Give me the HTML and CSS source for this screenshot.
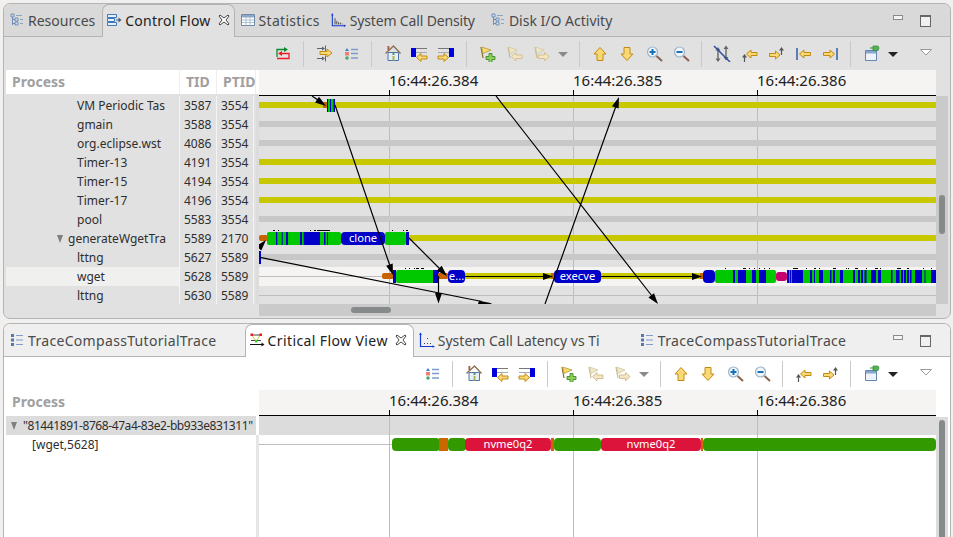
FILE: index.html
```html
<!DOCTYPE html>
<html lang="en">
<head>
    <meta charset="UTF-8">
    <meta name="viewport" content="width=device-width, initial-scale=1.0">
    <title>Trace Compass - Control Flow</title>
    <link rel="stylesheet" href="styles.css">
</head>
<body>
    <!-- icon set -->
    <svg class="icon-defs">
        <symbol id="t-tree" viewBox="0 0 16 16">
            <path d="M3.5 3v10M3.5 7.500H6M3.5 11.500H6" fill="none" stroke="#6f8fb8"/>
            <path d="M2 2h3v3H2zM6 6h3v3H6zM6 10h3v3H6z" fill="#cfdcec" stroke="#5f82ad" stroke-width=".8"/>
            <path d="M7 3.500h6M11 7.500h3M11 11.500h3" stroke="#8aa4c6" stroke-width="1.2"/>
        </symbol>
        <symbol id="t-flow" viewBox="0 0 16 16">
            <path d="M1.500 2.500h9v3h-9zM1.500 6.500h7v3h-7zM1.500 10.500h9v3h-9z" fill="#e8f0f8" stroke="#3f78b8"/>
            <path d="M10 8h3" stroke="#4a5f78"/>
            <path d="M12.500 5.500l3 2.500-3 2.500z" fill="#4a5f78"/>
        </symbol>
        <symbol id="t-table" viewBox="0 0 16 16">
            <path d="M1.500 2.500h13v11h-13z" fill="#fff" stroke="#6f8aa8"/>
            <path d="M2 3h12v2.500H2z" fill="#8fa8c4"/>
            <path d="M2 8h12M2 10.500h12M6 5.500v8M10 5.500v8" stroke="#9db2c8" stroke-width=".8"/>
        </symbol>
        <symbol id="t-density" viewBox="0 0 18 16">
            <path d="M1.500 1v13.500H16" fill="none" stroke="#1238d8" stroke-width="1.200"/>
            <path d="M.2 3l1.300-2.500L2.800 3zM14.500 13.200l2.500 1.300-2.500 1.300z" fill="#1238d8"/>
            <path d="M4.500 13V6M6.500 13V9M8.500 13v-2.500M10.500 13v-2M12.500 13v-1" stroke="#333" stroke-width=".9"/>
        </symbol>
        <symbol id="t-list" viewBox="0 0 16 16">
            <path d="M2 2h3v3H2zM2 6.500h3v3H2zM2 11h3v3H2z" fill="#5378b0"/>
            <path d="M7 3.500h7M7 8h7M7 12.500h7" stroke="#7f9ccc" stroke-width="1.200"/>
        </symbol>
        <symbol id="t-critical" viewBox="0 0 16 16">
            <path d="M2 3h10M2 8.500h10" stroke="#444"/>
            <path d="M3 3.500l4 5.500 4-5.500" fill="none" stroke="#d8c23a"/>
            <path d="M1 12.500h12" stroke="#111" stroke-width="1.200"/>
            <path d="M12.500 10.500l3 2-3 2z" fill="#111"/>
            <path d="M1.500 1.500h2.500v2.500H1.500zM10.500 1.500H13v2.500h-2.500z" fill="#e81818"/>
            <path d="M6 8h2.500v2.500H6z" fill="#38d838"/>
        </symbol>
        <symbol id="t-latency" viewBox="0 0 16 16">
            <path d="M1.500 1v13.500H15" fill="none" stroke="#1238d8" stroke-width="1.200"/>
            <path d="M.2 3l1.300-2.500L2.800 3zM13.500 13.200l2.500 1.300-2.500 1.300z" fill="#1238d8"/>
            <path d="M5 11h1v1H5zM8 6h1v1H8zM8 11h1v1H8zM11 11h1v1h-1z" fill="#444"/>
        </symbol>
        <symbol id="t-close" viewBox="0 0 12 12">
            <path d="M2 1l4 3 4-3 1 1-3 4 3 4-1 1-4-3-4 3-1-1 3-4-3-4z" fill="#fff" stroke="#333" stroke-width=".9"/>
        </symbol>

        <symbol id="i-sync" viewBox="0 0 18 18">
            <path d="M3 13V5.500h9" fill="none" stroke="#0a8a2c" stroke-width="1.300"/>
            <path d="M10 3l4 2.500L10 8z" fill="#0a8a2c"/>
            <path d="M8 9.500h7v5H3" fill="none" stroke="#ec1c24" stroke-width="1.300"/>
            <path d="M8 7L4 9.500 8 12z" fill="#ec1c24"/>
        </symbol>
        <symbol id="i-align" viewBox="0 0 18 18">
            <path d="M2 4.500h6M2 14.500h6M10.500 1.500v6M10.500 11.500v6" stroke="#5c6670"/>
            <path d="M7 2.500l3 2-3 2zM7 12.500l3 2-3 2z" fill="#5c6670"/>
            <path class="arrow" d="M5 7.500h7V5l5 4-5 4v-2.500H5z"/>
        </symbol>
        <symbol id="i-legend" viewBox="0 0 18 18">
            <path d="M5 4l2 3H3z" fill="#3f7fc0"/>
            <path d="M3 8h4v3.500H3z" fill="#e88078"/>
            <circle cx="5" cy="14" r="1.800" fill="#4aa868"/>
            <path d="M9 5.500h7M9 9.500h7M9 14h7" stroke="#7e9ccf" stroke-width="1.500"/>
        </symbol>
        <symbol id="i-home" viewBox="0 0 18 18">
            <path d="M4.500 2h1.800v4H4.500z" fill="#a8583c"/>
            <path d="M5 8.500h10.500v8H5z" fill="#e6eef8" stroke="#4f74ab"/>
            <path d="M2.500 9.500L10.500 2l7 7.500" fill="none" stroke="#8a7350" stroke-width="1.400"/>
            <path d="M9.500 12h2v4.500h-2z" fill="#a7b84a"/>
            <path d="M9.500 9h2v2h-2z" fill="#5e9a5e"/>
        </symbol>
        <symbol id="i-back" viewBox="0 0 18 18">
            <path d="M1 4h5v9H1z" fill="#0000dc"/>
            <path d="M6 4.500h11" stroke="#777"/>
            <path d="M6 8.500h11" stroke="#aaa"/>
            <path class="arrow" d="M6.500 13.500l4.500-4V12h6v3h-6v2.500z"/>
        </symbol>
        <symbol id="i-forward" viewBox="0 0 18 18">
            <path d="M12 4h5v9h-5z" fill="#0000dc"/>
            <path d="M1 4.500h11" stroke="#777"/>
            <path d="M1 8.500h11" stroke="#aaa"/>
            <path class="arrow" d="M11.500 13.500l-4.500-4V12H1v3h6v2.500z"/>
        </symbol>
        <symbol id="i-mark-add" viewBox="0 0 18 18">
            <path d="M3 3l2 11" stroke="#8a6a2a" stroke-width="1.200"/>
            <path d="M3.500 3L13 6 5 9.500z" fill="#f4dc68" stroke="#b89838" stroke-width=".8"/>
            <path d="M11 9.500h3v3h3v3h-3v3h-3v-3H8v-3h3z" fill="#8fd14f" stroke="#3c8a3c" stroke-width=".9"/>
        </symbol>
        <symbol id="i-mark-prev" viewBox="0 0 18 18">
            <path d="M3 3l2 11" stroke="#c4b890" stroke-width="1.200"/>
            <path d="M3.500 3L12 6 5 9.500z" fill="#efe8c8" stroke="#d0c6a0" stroke-width=".8"/>
            <path d="M6.500 12.500l4.500-4V11h6v3.500h-6V17z" fill="#f4e6c4" stroke="#d4bf8e"/>
        </symbol>
        <symbol id="i-mark-next" viewBox="0 0 18 18">
            <path d="M3 3l2 11" stroke="#c4b890" stroke-width="1.200"/>
            <path d="M3.500 3L12 6 5 9.500z" fill="#efe8c8" stroke="#d0c6a0" stroke-width=".8"/>
            <path d="M17 12.500l-4.500-4V11h-6v3.500h6V17z" fill="#f4e6c4" stroke="#d4bf8e"/>
        </symbol>
        <symbol id="i-up" viewBox="0 0 18 18">
            <path class="arrow" d="M9 3.500l6 6.500h-3v6.500H6V10H3z"/>
        </symbol>
        <symbol id="i-down" viewBox="0 0 18 18">
            <path class="arrow" d="M9 16.500L3 10h3V3.500h6V10h3z"/>
        </symbol>
        <symbol id="i-zoom-in" viewBox="0 0 18 18">
            <path d="M11.500 12l5.500 5" stroke="#8a6050" stroke-width="2"/>
            <circle cx="7.500" cy="8" r="5" fill="#eef5fb" stroke="#9fb4c8" stroke-width="1.200"/>
            <path d="M7.500 5v6M4.500 8h6" stroke="#1a6fb5" stroke-width="2"/>
        </symbol>
        <symbol id="i-zoom-out" viewBox="0 0 18 18">
            <path d="M11.500 12l5.500 5" stroke="#8a6050" stroke-width="2"/>
            <circle cx="7.500" cy="8" r="5" fill="#eef5fb" stroke="#9fb4c8" stroke-width="1.200"/>
            <path d="M4.500 8h6" stroke="#1a6fb5" stroke-width="2"/>
        </symbol>
        <symbol id="i-hide-arrows" viewBox="0 0 18 18">
            <path d="M5 6v9M13 4v9" stroke="#666" stroke-width="1.400"/>
            <path d="M5 3l2.500 3.500h-5zM5 18l2.500-3.500h-5zM13 1.500l2.500 3.500h-5zM13 16.500l2.500-3.500h-5z" fill="#666"/>
            <path d="M1 2l16 16" stroke="#2a4fa0" stroke-width="1.500"/>
        </symbol>
        <symbol id="i-arrow-prev" viewBox="0 0 18 18">
            <path d="M4.500 13v5" stroke="#555" stroke-width="1.200"/>
            <path d="M4.500 10L7 13.500H2z" fill="#555"/>
            <path class="arrow" d="M6.500 10L11 6v2.500h6v3h-6V14z"/>
        </symbol>
        <symbol id="i-arrow-next" viewBox="0 0 18 18">
            <path d="M14.500 6v5" stroke="#555" stroke-width="1.200"/>
            <path d="M14.500 3L17 6.500h-5z" fill="#555"/>
            <path class="arrow" d="M13 11L8.500 7v2.500h-6v3h6V15z"/>
        </symbol>
        <symbol id="i-line-prev" viewBox="0 0 18 18">
            <path d="M2 4h2v12H2z" fill="#5b7fb5"/>
            <path class="arrow" d="M5.500 10L10 6v2.500h6.500v3H10V14z"/>
        </symbol>
        <symbol id="i-line-next" viewBox="0 0 18 18">
            <path d="M15 4h2v12h-2z" fill="#5b7fb5"/>
            <path class="arrow" d="M13.500 10L9 6v2.500H2.500v3H9V14z"/>
        </symbol>
        <symbol id="i-pin" viewBox="0 0 18 18">
            <path d="M3.500 6.500h11v10h-11z" fill="#eef3f9" stroke="#5f86b4"/>
            <path d="M4 7h10v2.500H4z" fill="#86a8cf"/>
            <path d="M8 4h4" stroke="#2e8a2e"/>
            <path d="M11 2h5l1 2-1 2.500h-5z" fill="#58b058" stroke="#2e8a2e" stroke-width=".7"/>
        </symbol>
        <symbol id="i-drop-grey" viewBox="0 0 18 18">
            <path d="M3 8h10l-5 5z" fill="#8a8a8a"/>
        </symbol>
        <symbol id="i-drop-black" viewBox="0 0 18 18">
            <path d="M3 8h10l-5 5z" fill="#222"/>
        </symbol>
        <symbol id="i-view-menu" viewBox="0 0 18 18">
            <path d="M3.500 5.500h11L9 11z" fill="#fff" stroke="#9a9a9a"/>
        </symbol>
    </svg>

    <section class="part part-top">
        <div class="tabbar">
            <div class="tab"><svg class="tab-icon"><use href="#t-tree"/></svg>Resources</div>
            <div class="tab tab-active tab-flow">
                <svg class="tab-icon"><use href="#t-flow"/></svg>Control Flow
                <svg class="tab-close"><use href="#t-close"/></svg>
            </div>
            <div class="tab tab-stats"><svg class="tab-icon"><use href="#t-table"/></svg>Statistics</div>
            <div class="tab tab-density"><svg class="tab-icon"><use href="#t-density"/></svg>System Call Density</div>
            <div class="tab tab-disk"><svg class="tab-icon"><use href="#t-tree"/></svg>Disk I/O Activity</div>
            <div class="part-controls">
                <span class="btn-min"></span>
                <span class="btn-max"></span>
            </div>
        </div>

        <div class="toolbar">
            <svg class="tool"><use href="#i-sync"/></svg>
            <span class="tool-sep"></span>
            <svg class="tool"><use href="#i-align"/></svg>
            <svg class="tool"><use href="#i-legend"/></svg>
            <span class="tool-sep"></span>
            <svg class="tool"><use href="#i-home"/></svg>
            <svg class="tool"><use href="#i-back"/></svg>
            <svg class="tool"><use href="#i-forward"/></svg>
            <span class="tool-sep"></span>
            <svg class="tool"><use href="#i-mark-add"/></svg>
            <svg class="tool"><use href="#i-mark-prev"/></svg>
            <svg class="tool"><use href="#i-mark-next"/></svg>
            <svg class="tool-drop"><use href="#i-drop-grey"/></svg>
            <span class="tool-sep"></span>
            <svg class="tool"><use href="#i-up"/></svg>
            <svg class="tool"><use href="#i-down"/></svg>
            <svg class="tool"><use href="#i-zoom-in"/></svg>
            <svg class="tool"><use href="#i-zoom-out"/></svg>
            <span class="tool-sep"></span>
            <svg class="tool"><use href="#i-hide-arrows"/></svg>
            <svg class="tool"><use href="#i-arrow-prev"/></svg>
            <svg class="tool"><use href="#i-arrow-next"/></svg>
            <svg class="tool"><use href="#i-line-prev"/></svg>
            <svg class="tool"><use href="#i-line-next"/></svg>
            <span class="tool-sep"></span>
            <svg class="tool"><use href="#i-pin"/></svg>
            <svg class="tool-drop"><use href="#i-drop-black"/></svg>
            <svg class="tool tool-menu"><use href="#i-view-menu"/></svg>
        </div>

        <div class="viewer">
            <div class="tree">
                <div class="tree-head">
                    <div class="head-cell head-process">Process</div>
                    <div class="head-cell">TID</div>
                    <div class="head-cell">PTID</div>
                </div>
                <div class="row"><div class="cell name">VM Periodic Tas</div><div class="cell">3587</div><div class="cell">3554</div></div>
                <div class="row"><div class="cell name">gmain</div><div class="cell">3588</div><div class="cell">3554</div></div>
                <div class="row"><div class="cell name">org.eclipse.wst</div><div class="cell">4086</div><div class="cell">3554</div></div>
                <div class="row"><div class="cell name">Timer-13</div><div class="cell">4191</div><div class="cell">3554</div></div>
                <div class="row"><div class="cell name">Timer-15</div><div class="cell">4194</div><div class="cell">3554</div></div>
                <div class="row"><div class="cell name">Timer-17</div><div class="cell">4196</div><div class="cell">3554</div></div>
                <div class="row"><div class="cell name">pool</div><div class="cell">5583</div><div class="cell">3554</div></div>
                <div class="row"><div class="cell name-parent"><span class="twist"></span>generateWgetTra</div><div class="cell">5589</div><div class="cell">2170</div></div>
                <div class="row"><div class="cell name">lttng</div><div class="cell">5627</div><div class="cell">5589</div></div>
                <div class="row"><div class="cell name row-selected">wget</div><div class="cell">5628</div><div class="cell">5589</div></div>
                <div class="row"><div class="cell name">lttng</div><div class="cell">5630</div><div class="cell">5589</div></div>
            </div>
            <div class="sash"></div>
            <div class="graph">
                <div class="timescale">
                    <div class="time-label">16:44:26.384<span class="time-tick"></span></div>
                    <div class="time-label">16:44:26.385<span class="time-tick"></span></div>
                    <div class="time-label">16:44:26.386<span class="time-tick"></span></div>
                </div>
                <svg class="flow-canvas flow-top" viewBox="259 96 677 208">
                    <rect x="259" y="267" width="677" height="19" fill="#f5f4f2"/>
                    <path class="grid" d="M389.500 96v208M573.500 96v208M757.500 96v208"/>
                    <path class="grid" d="M259 295.500h677M259 276.500h123"/>

                    <rect class="s-wait" x="259" y="102" width="677" height="6"/>
                    <rect class="s-idle" x="259" y="121" width="677" height="6"/>
                    <rect class="s-idle" x="259" y="140" width="677" height="6"/>
                    <rect class="s-wait" x="259" y="159" width="677" height="6"/>
                    <rect class="s-wait" x="259" y="178" width="677" height="6"/>
                    <rect class="s-wait" x="259" y="197" width="677" height="6"/>
                    <rect class="s-idle" x="259" y="216" width="677" height="6"/>
                    <rect class="s-wait" x="409" y="235" width="527" height="6"/>
                    <rect class="s-idle" x="259" y="254" width="677" height="6"/>

                    <!-- VM Periodic Tas -->
                    <rect class="s-block" x="323" y="102" width="4" height="6"/>
                    <rect class="s-user" x="327" y="99" width="8" height="13"/>
                    <path class="s-sys" d="M327 99h1v13h-1zM330 99h1v13h-1zM333.500 99h1.500v13h-1.500z"/>

                    <!-- generateWgetTra -->
                    <rect class="s-block" x="259" y="235" width="9" height="6" rx="2"/>
                    <rect class="s-user" x="267" y="232" width="74" height="13" rx="2"/>
                    <path class="s-sys" d="M276 232h1.300v13H276zM281.700 232h1v13h-1zM286 232h2v13h-2zM300 232h2v13h-2zM303.700 232H320v13h-16.300zM324 232h1.500v13H324zM327 232h1v13h-1z"/>
                    <rect class="s-user" x="385" y="232" width="21" height="13" rx="2"/>
                    <rect class="s-sys" x="406" y="232" width="3" height="13"/>
                    <rect class="s-sys" x="341" y="232" width="44" height="13" rx="4"/>
                    <text class="bar-label" x="363" y="242">clone</text>
                    <path class="ticks" d="M273 230h2v1h-2zM278 230h1v1h-1zM310 230h1v1h-1zM314 230h2v1h-2zM317 230h13v1h-13zM392 230h1v1h-1zM403 230h1v1h-1zM406 230h2v1h-2z"/>

                    <!-- lttng -->
                    <rect class="s-sys" x="259" y="251" width="2" height="13"/>

                    <!-- wget -->
                    <rect class="s-block" x="382" y="273" width="12" height="6" rx="2"/>
                    <rect class="s-sys" x="393" y="270" width="3" height="13"/>
                    <rect class="s-user" x="396" y="270" width="38" height="13" rx="2"/>
                    <rect class="s-sys" x="433" y="270" width="6" height="13"/>
                    <rect class="s-block" x="438" y="273" width="10" height="6" rx="1"/>
                    <rect class="s-sys" x="448" y="270" width="17" height="13" rx="4"/>
                    <text class="bar-label" x="456.500" y="280">e...</text>
                    <rect class="s-wait" x="465" y="273" width="89" height="6"/>
                    <rect class="s-block" x="551" y="273" width="4" height="6"/>
                    <rect class="s-sys" x="554" y="270" width="47" height="13" rx="4"/>
                    <text class="bar-label" x="577.500" y="280">execve</text>
                    <rect class="s-wait" x="601" y="273" width="101" height="6"/>
                    <rect class="s-block" x="700" y="273" width="3" height="6"/>
                    <rect class="s-sys" x="703" y="270" width="12" height="13" rx="4"/>
                    <rect class="s-user" x="715" y="270" width="61" height="13" rx="2"/>
                    <path class="s-sys" d="M733 270h2v13h-2zM738 270h8v13h-8zM752 270h4v13h-4zM759 270h7v13h-7z"/>
                    <rect class="s-preempt" x="776" y="272" width="11" height="9" rx="3"/>
                    <rect class="s-user" x="787" y="270" width="149" height="13"/>
                    <path class="s-sys" d="M787 270h2v13h-2zM790 270h1v13h-1zM792 270h11v13h-11zM810 270h2v13h-2zM814 270h1v13h-1zM819 270h4v13h-4zM830 270h1.500v13H830zM833 270h2v13h-2zM840 270h3v13h-3zM853 270h2v13h-2zM858 270h2v13h-2zM861 270h2v13h-2zM864.500 270h2v13h-2zM871 270h5v13h-5zM878 270h3v13h-3zM891 270h1.500v13H891zM896 270h3.500v13H896zM901 270h2v13h-2zM904 270h2v13h-2zM907 270h2v13h-2zM910 270h1.500v13H910zM915 270h7v13h-7zM924.500 270h1v13h-1zM931 270h5v13h-5z"/>
                    <path class="ticks" d="M405 268h1v1h-1zM409 268h1v1h-1zM414 268h1v1h-1zM416 268h3v1h-3zM421 268h3v1h-3zM725 268h1v1h-1zM743 268h3v1h-3zM749 268h1v1h-1zM754 268h1v1h-1zM759 268h1v1h-1zM764 268h1v1h-1zM769 268h1v1h-1zM793 268h5v1h-5zM806 268h1v1h-1zM814 268h2v1h-2zM819 268h1v1h-1zM833 268h3v1h-3zM846 268h1v1h-1zM848 268h1v1h-1zM855 268h3v1h-3zM866 268h1v1h-1zM875 268h3v1h-3zM880 268h1v1h-1zM897 268h4v1h-4zM907 268h2v1h-2zM923 268h1v1h-1zM931 268h1v1h-1z"/>

                    <!-- arrows -->
                    <path class="link" d="M335 105L390 266M312 96l6 4M409 238l31 31M438.500 276v18M260 257.300L482 301.500M545 304l71-198M496 96l156 200M465 276.500h80M601 276.500h92"/>
                    <path class="head" d="M326 106l-11-3.500 4-5.800zM393 275l-6.900-9.300 6.600-2.200zM266 240l-4.700 10.600-5.200-4.600zM447 276l-10.300-5.300 5-5zM438.500 303.500L435 293h7zM479 300.800l11.500 2.200 1.500 1h-14zM619 97l-.4 11.600-6.600-2.400zM658 304l-9.600-6.500 5.600-4.300zM553 276.500l-10-3.500v7zM702 276.500l-10-3.500v7z"/>
                </svg>
            </div>
            <div class="vscroll"><span class="vthumb vthumb-top"></span></div>
        </div>
        <div class="hscroll"><span class="hthumb"></span></div>
    </section>

    <section class="part part-bottom">
        <div class="tabbar">
            <div class="tab tab-trace"><svg class="tab-icon"><use href="#t-list"/></svg>TraceCompassTutorialTrace</div>
            <div class="tab tab-active tab-critical">
                <svg class="tab-icon"><use href="#t-critical"/></svg>Critical Flow View
                <svg class="tab-close"><use href="#t-close"/></svg>
            </div>
            <div class="tab tab-latency"><svg class="tab-icon"><use href="#t-latency"/></svg><span class="tab-clip">System Call Latency vs Ti</span></div>
            <div class="tab tab-trace-last"><svg class="tab-icon"><use href="#t-list"/></svg>TraceCompassTutorialTrace</div>
            <div class="part-controls">
                <span class="btn-min"></span>
                <span class="btn-max"></span>
            </div>
        </div>

        <div class="toolbar">
            <svg class="tool"><use href="#i-legend"/></svg>
            <span class="tool-sep"></span>
            <svg class="tool"><use href="#i-home"/></svg>
            <svg class="tool"><use href="#i-back"/></svg>
            <svg class="tool"><use href="#i-forward"/></svg>
            <span class="tool-sep"></span>
            <svg class="tool"><use href="#i-mark-add"/></svg>
            <svg class="tool"><use href="#i-mark-prev"/></svg>
            <svg class="tool"><use href="#i-mark-next"/></svg>
            <svg class="tool-drop"><use href="#i-drop-grey"/></svg>
            <span class="tool-sep"></span>
            <svg class="tool"><use href="#i-up"/></svg>
            <svg class="tool"><use href="#i-down"/></svg>
            <svg class="tool"><use href="#i-zoom-in"/></svg>
            <svg class="tool"><use href="#i-zoom-out"/></svg>
            <span class="tool-sep"></span>
            <svg class="tool"><use href="#i-arrow-prev"/></svg>
            <svg class="tool"><use href="#i-arrow-next"/></svg>
            <span class="tool-sep"></span>
            <svg class="tool"><use href="#i-pin"/></svg>
            <svg class="tool-drop"><use href="#i-drop-black"/></svg>
            <svg class="tool tool-menu"><use href="#i-view-menu"/></svg>
        </div>

        <div class="viewer">
            <div class="tree">
                <div class="tree-head tree-head-solo">
                    <div class="head-cell">Process</div>
                </div>
                <div class="crit-row crit-row-root"><span class="twist twist-root"></span><span class="crit-id">"81441891-8768-47a4-83e2-bb933e831311"</span></div>
                <div class="crit-row crit-row-child">[wget,5628]</div>
            </div>
            <div class="sash sash-light"></div>
            <div class="graph">
                <div class="timescale">
                    <div class="time-label">16:44:26.384<span class="time-tick"></span></div>
                    <div class="time-label">16:44:26.385<span class="time-tick"></span></div>
                    <div class="time-label">16:44:26.386<span class="time-tick"></span></div>
                </div>
                <svg class="flow-canvas flow-bottom" viewBox="259 416 677 121">
                    <rect x="259" y="416" width="677" height="19" fill="#dcdcdc"/>
                    <path class="grid" d="M389.500 416v121M573.500 416v121M757.500 416v121"/>
                    <path class="grid" d="M259 444.500h133"/>
                    <rect class="c-run" x="392" y="438" width="48" height="13" rx="4"/>
                    <rect class="c-block" x="439" y="438" width="9" height="13"/>
                    <rect class="c-run" x="448" y="438" width="18" height="13" rx="4"/>
                    <rect class="c-net" x="465" y="438" width="86" height="13" rx="4"/>
                    <rect class="c-block" x="551" y="438" width="3" height="13"/>
                    <rect class="c-run" x="554" y="438" width="47" height="13" rx="4"/>
                    <rect class="c-net" x="601" y="438" width="100" height="13" rx="4"/>
                    <rect class="c-block" x="701" y="438" width="2" height="13"/>
                    <rect class="c-run" x="703" y="438" width="233" height="13" rx="4"/>
                    <text class="bar-label" x="508" y="448">nvme0q2</text>
                    <text class="bar-label" x="651" y="448">nvme0q2</text>
                </svg>
            </div>
            <div class="vscroll vscroll-light"><span class="vthumb vthumb-bottom"></span></div>
        </div>
    </section>
</body>
</html>
```

FILE: styles.css
```css
html, body {
    margin: 0;
    padding: 0;
    height: 537px;
    overflow: hidden;
}

body {
    background-color: #f1f0ef;
    font-family: "Noto Sans", sans-serif;
    color: #2e2e2e;
    padding-top: 3px;
    box-sizing: border-box;
}

.icon-defs {
    display: none;
}

.part {
    box-sizing: border-box;
    width: 948px;
    margin-left: 3px;
    border: 1px solid #b4b4b4;
    border-radius: 7px 7px 0 0;
    overflow: hidden;
}

.part-top {
    height: 316px;
    background-color: #e1e1e1;
    border-radius: 7px;
}

.part-bottom {
    height: 220px;
    margin-top: 4px;
    background-color: #fff;
    border-bottom: none;
}

/* tabs */
.tabbar {
    display: flex;
    height: 32px;
    border-bottom: 1px solid #b4b4b4;
    box-sizing: content-box;
    font-size: 14px;
    color: #4a4a4a;
}

.part-top .tabbar {
    background-color: #d9d9d9;
}

.part-bottom .tabbar {
    background-color: #efefef;
}

.tab {
    display: flex;
    align-items: center;
    padding: 0 7px 0 5px;
    white-space: nowrap;
}

.tab-icon {
    width: 16px;
    height: 16px;
    margin-right: 3px;
    flex: none;
}

.tab-active {
    box-sizing: border-box;
    height: 33px;
    padding: 0 6px 2px 3px;
    color: #222;
    border: 1px solid #b4b4b4;
    border-bottom: none;
    border-radius: 7px 7px 0 0;
}

.part-top .tab-active {
    background-color: #e1e1e1;
}

.part-bottom .tab-active {
    background-color: #fff;
}

.tab-close {
    width: 12px;
    height: 12px;
    margin-left: 7px;
    flex: none;
}

.tab-flow {
    padding-right: 4px;
    letter-spacing: .25px;
}

.tab-stats {
    letter-spacing: .3px;
}

.tab-density {
    margin-left: -1px;
    letter-spacing: -.15px;
}

.tab-disk {
    margin-left: 3px;
}

.tab-trace {
    padding-right: 28px;
    letter-spacing: .32px;
}

.tab-critical {
    letter-spacing: .4px;
}

.tab-latency {
    width: 220px;
    box-sizing: border-box;
}

.tab-clip {
    display: block;
    width: 164px;
    overflow: hidden;
}

.tab-trace-last {
    letter-spacing: .32px;
}

.part-controls {
    display: flex;
    align-items: flex-start;
    gap: 17px;
    margin-left: auto;
    padding: 11px 19px 0 0;
}

.btn-min {
    box-sizing: border-box;
    width: 10px;
    height: 5px;
    background-color: #f4f4f4;
    border: 1px solid #8a8a8a;
}

.btn-max {
    box-sizing: border-box;
    width: 11px;
    height: 12px;
    background-color: #f0f0f0;
    border: 1px solid #666;
    border-top-width: 2px;
}

/* toolbar */
.toolbar {
    display: flex;
    justify-content: flex-end;
    align-items: flex-start;
    height: 33px;
    box-sizing: border-box;
    padding: 7px 10px 0 0;
}

.tool {
    width: 18px;
    height: 18px;
    margin: 0 5px 0 4px;
    flex: none;
}

.tool-drop {
    width: 18px;
    height: 18px;
    flex: none;
}

.tool-menu {
    margin-left: 14px;
}

.tool-sep {
    width: 1px;
    height: 26px;
    margin: -3px 7px 0 6px;
    background-color: #c9c9c9;
    flex: none;
}

.arrow {
    fill: #f9d976;
    stroke: #c38a12;
    stroke-width: 1;
}

/* tree + graph */
.viewer {
    display: flex;
    padding-left: 2px;
}

.part-top .viewer {
    height: 234px;
}

.part-bottom .viewer {
    height: 147px;
}

.tree {
    width: 250px;
    flex: none;
    font-size: 12px;
    line-height: 19px;
    overflow: hidden;
}

.tree-head {
    display: grid;
    grid-template-columns: 174px 37px 39px;
    height: 24px;
    margin-bottom: 2px;
    background-color: #fff;
    font-size: 14px;
    font-weight: 700;
    line-height: 24px;
    color: #a0a0a0;
}

.tree-head-solo {
    grid-template-columns: 250px;
}

.tree-head-solo .head-cell {
    border-right: none;
}

.head-cell {
    box-sizing: border-box;
    padding-left: 6px;
    border-right: 1px solid #eee;
    white-space: nowrap;
    overflow: hidden;
}

.row {
    display: grid;
    grid-template-columns: 174px 37px 37px;
    height: 19px;
}

.cell {
    box-sizing: border-box;
    padding-left: 4px;
    border-right: 1px solid #f4f4f4;
    white-space: nowrap;
    overflow: hidden;
}

.cell.name {
    padding-left: 71px;
}

.name-parent {
    display: flex;
    align-items: center;
    padding-left: 51px;
    border-right: 1px solid #f4f4f4;
    white-space: nowrap;
}

.row-selected {
    background-color: #f0f0ee;
}

.twist {
    width: 0;
    height: 0;
    margin-right: 5px;
    border-left: 3.5px solid transparent;
    border-right: 3.5px solid transparent;
    border-top: 8px solid #7f7f7f;
    flex: none;
}

.sash {
    box-sizing: border-box;
    width: 3px;
    flex: none;
    border-top: 24px solid #fff;
    background-color: #dcdcdc;
}

.sash-light {
    border-top-width: 45px;
    background-color: #e6e6e6;
}

.graph {
    width: 677px;
    flex: none;
}

.timescale {
    display: flex;
    box-sizing: border-box;
    height: 26px;
    padding-left: 130px;
    background-color: #f5f4f2;
    border-bottom: 1px solid #000;
}

.time-label {
    display: flex;
    flex-direction: column;
    flex: none;
    width: 184px;
    font-size: 15px;
    line-height: 20px;
    color: #222;
}

.time-tick {
    width: 0;
    height: 5px;
    border-left: 1px solid #000;
}

.flow-canvas {
    display: block;
    width: 677px;
}

.flow-top {
    height: 208px;
}

.flow-bottom {
    height: 121px;
}

.grid {
    fill: none;
    stroke: #bdbdbd;
    stroke-width: 1;
}

.s-wait {
    fill: #c8c800;
}

.s-idle {
    fill: #c8c8c8;
}

.s-user {
    fill: #00c800;
}

.s-sys {
    fill: #0000c8;
}

.s-block {
    fill: #c86400;
}

.s-preempt {
    fill: #c8006e;
}

.c-run {
    fill: #339900;
}

.c-net {
    fill: #dc143c;
}

.c-block {
    fill: #cc6600;
}

.ticks {
    fill: #000;
}

.link {
    fill: none;
    stroke: #000;
    stroke-width: 1.2;
}

.head {
    fill: #000;
}

.bar-label {
    fill: #fff;
    font-family: "Noto Sans", sans-serif;
    font-size: 11.2px;
    text-anchor: middle;
}

/* scrollbars */
.vscroll {
    box-sizing: border-box;
    width: 12px;
    margin-top: 26px;
    padding: 0 3px;
    background-color: #cacaca;
    flex: none;
}

.vscroll-light {
    margin-top: 27px;
    background-color: #dcdcdc;
}

.vthumb {
    display: block;
    width: 6px;
    background-color: #868a8a;
    border-radius: 3px;
}

.vthumb-top {
    height: 39px;
    margin-top: 99px;
}

.vthumb-bottom {
    height: 130px;
    margin-top: 3px;
}

.hscroll {
    box-sizing: border-box;
    width: 677px;
    height: 12px;
    margin-left: 255px;
    padding: 3px 0 0 92px;
    background-color: #cacaca;
}

.hthumb {
    display: block;
    width: 40px;
    height: 6px;
    background-color: #868a8a;
    border-radius: 3px;
}

/* critical flow rows */
.crit-row {
    display: flex;
    align-items: center;
    height: 19px;
    white-space: nowrap;
    overflow: hidden;
}

.crit-row-root {
    padding-left: 5px;
    background-color: #dcdcdc;
}

.crit-row-child {
    padding-left: 26px;
}

.twist-root {
    margin-right: 6px;
}

.crit-id {
    flex: none;
    letter-spacing: -.42px;
}
```
